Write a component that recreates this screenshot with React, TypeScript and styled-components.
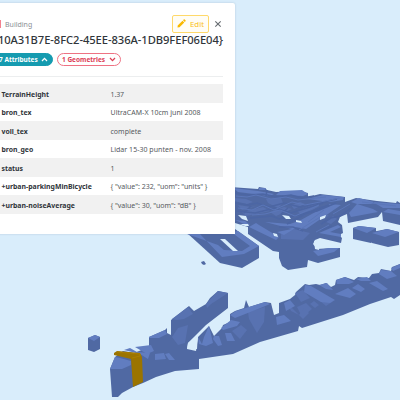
import React from 'react';
import styled, { createGlobalStyle } from 'styled-components';

const GlobalStyle = createGlobalStyle`
  body { margin: 0; overflow: hidden; background: #d9edfb; }
  * { box-sizing: border-box; }
`;

const Viewer = styled.main`
  position: relative;
  width: 400px;
  height: 400px;
  overflow: hidden;
  background: #d9edfb;
  font-family: "Noto Sans", "Open Sans", sans-serif;
  color: #30353a;
`;

const Scene = styled.svg`
  display: block;
  width: 400px;
  height: 400px;
`;

const Panel = styled.section`
  position: absolute;
  top: 3px;
  left: -10px;
  width: 245px;
  height: 231px;
  padding: 11px 12px 0 0;
  background: #fff;
  border-radius: 0 2px 0 0;
  box-shadow: 0 0 2px rgba(70, 100, 130, 0.3);
`;

const Header = styled.header`
  display: flex;
  align-items: center;
  height: 19px;
  padding-left: 8px;
`;

const Tag = styled.span`
  width: 3px;
  height: 8px;
  margin-top: 1px;
  background: #f3818f;
`;

const Kind = styled.span`
  flex: 1;
  margin: 2px 0 0 4px;
  font-size: 7px;
  line-height: 10px;
  color: #8a8f94;
`;

const EditButton = styled.button`
  display: flex;
  align-items: center;
  justify-content: center;
  gap: 4px;
  width: 37px;
  height: 18px;
  padding: 0;
  border: 1px solid #ffd96a;
  border-radius: 2px;
  background: #fffdf5;
  color: #f9bf20;
  font: 7.8px "Noto Sans", sans-serif;
`;

const CloseButton = styled.button`
  display: flex;
  margin: 0 1px 0 5px;
  padding: 0;
  border: 0;
  background: none;
`;

const Title = styled.h1`
  display: flex;
  justify-content: flex-end;
  margin: 0;
  height: 14px;
  font-size: 11.2px;
  font-weight: 500;
  line-height: 14px;
  letter-spacing: -0.06px;
  white-space: nowrap;
`;

const Pills = styled.div`
  display: flex;
  gap: 4px;
  height: 30px;
  padding-top: 6px;
  border-bottom: 1px solid #eceeef;
`;

const Pill = styled.button<{ $filled?: boolean }>`
  display: flex;
  align-items: center;
  justify-content: space-between;
  width: 64px;
  height: 13px;
  padding: 0 4px;
  border: 1px solid ${p => (p.$filled ? '#159bb0' : '#ee7283')};
  border-radius: 7px;
  background: ${p => (p.$filled ? '#159bb0' : '#fff')};
  color: ${p => (p.$filled ? '#fff' : '#dc4056')};
  font: 700 6.5px "Noto Sans", sans-serif;
  white-space: nowrap;
  &:first-child { width: 63px; padding-left: 8px; }
`;

const Attributes = styled.dl`
  display: grid;
  grid-auto-rows: 18.5px;
  margin: 7.4px 0 0;
`;

const Row = styled.div`
  display: grid;
  grid-template-columns: 109px 1fr;
  align-items: center;
  padding: 1px 0 0 11.5px;
  font-size: 7px;
  line-height: 9px;
  white-space: pre;
  &:nth-child(odd) { background: #f1f1f1; }
`;

const Name = styled.dt`
  font-size: 6.9px;
  font-weight: 700;
`;

const Value = styled.dd<{ $spacing: number }>`
  margin: 0;
  color: #55595d;
  letter-spacing: ${p => p.$spacing}px;
`;

const attributes: [string, string, number][] = [
  ['TerrainHeight', '1.37', -0.1],
  ['bron_tex', 'UltraCAM-X 10cm juni 2008', 0.03],
  ['voll_tex', 'complete', 0],
  ['bron_geo', 'Lidar 15-30 punten - nov. 2008', 0.03],
  ['status', '1', 0],
  ['+urban-parkingMinBicycle', '{ "value": 232, "uom": "units" }', -0.02],
  ['+urban-noiseAverage', '{ "value": 30, "uom": "dB" }', -0.02],
];

const wall = '#5069a3';
const roof = '#617dc0';
const mid = '#5872b1';
const ground = '#d9edfb';

const walls = [
  // City blocks on the far side of the water
  '230,187 258,189 259,187 265,188 267,190 276,192 300,191 308,193 308,197 320,194 345,197 345,202 356,198 377,201 396,203 397,201 400,203 400,225 383,221 382,212 378,217 348,223 347,214 340,217 338,222 342,225 343,233 339,235 342,238 341,243 320,238 315,240 313,244 317,249 332,248 340,248 340,257 318,263 308,260 307,267 288,270 282,266 279,258 279,252 273,251 248,234 248,227 235,223 230,220',
  // Courtyard block
  '187,233 235,229 259,246 259,258 242,268 220,263',
  // Freestanding blocks
  '353,228 359,226 376,228 376,240 371,243 353,239',
  '372,232 387,229 399,232 399,245 388,247 372,243',
  '201,262 204,261 206,264 204,265 202,264',
  '88,338 95,335 100,337 100,349 94,352 88,350',
  // Long waterfront row
  '196,351 198,337 209,326 214,336 222,328 223,325 230,322 230,314 235,311 244,308 246,300 249,307 265,302 271,303 274,315 279,313 279,303 290,299 295,295 296,292 305,284 309,285 316,284 320,285 326,283 331,287 335,285 336,280 345,277 354,280 358,277 369,278 372,274 379,273 381,269 391,271 392,267 400,264 400,295 394,299 391,297 370,304 343,315 302,328 299,326 298,331 260,342 233,354 199,359 199,369 175,371 156,377 143,383 133,387 122,393 118,397 112,397 110,369 115,357 123,351 134,353 149,347 149,337 165,330 167,328 167,333 171,335 171,320 189,306 194,311 206,304 210,298 218,291 228,293 228,308 206,325 188,343 187,349',
];

const roofs = [
  '187,234 199,233 222,257 244,254 259,246 238,231 231,232 250,246 242,251 224,250 218,245',
  '353,228 359,226 376,228 367,233', '372,233 387,229 399,232 385,237',
  '88,338 95,335 100,337 94,341',
  '110,369 115,357 120,358 131,361 131,365 122,369',
  '124,350 130,348 137,352 150,353 148,359 140,354',
  '135,347 151,345 154,351 147,354', '149,337 165,330 167,334 159,338 149,338',
  '155,354 164,353 166,359 155,360', '165,354 169,353 175,360 169,360',
  '198,337 202,344 204,337 209,326 213,343 206,346 199,344',
  '214,336 219,336 222,345 218,346 213,339', '225,333 231,333 235,341 227,341',
  '221,328 231,320 240,322 237,326 223,330', '230,315 236,311 265,302 270,304 263,307 235,318',
  '276,317 284,315 291,321 277,325', '284,303 290,300 295,306 286,311',
  '305,285 311,286 335,300 330,303 321,302 304,292',
  '319,285 327,283 333,290 326,289', '336,280 345,277 354,282 349,284 337,284',
  '335,294 348,288 356,294 350,298', '356,279 367,277 371,281 361,281',
  '352,288 358,284 365,289 361,292', '369,283 377,281 388,289 383,291',
  '381,270 391,271 397,276 387,279 379,274', '391,268 400,264 400,268 393,271',
  '233,188 258,191 274,194 270,196 238,192', '259,188 266,188 265,190 259,190',
  '280,191 302,190 308,194 303,196 276,195', '307,199 323,195 344,197 343,200 330,202',
  '349,213 357,204 373,209 378,212 351,217', '383,212 388,209 400,211 400,215',
  '351,202 359,198 374,202 371,204 357,204', '373,202 400,204 400,208 383,208',
  '235,220 245,221 250,225 244,224',
  '249,227 256,223 259,225 279,237 276,240',
  '265,222 290,224 299,221 302,224 284,235 277,232 292,229',
  '290,226 330,204 341,205 306,229',
  '319,233 338,225 341,227 330,232 341,234 341,237', '313,251 329,248 339,248 334,252 318,256',
];

const accents = [
  '172,319 188,307 193,314 184,319 177,320', '206,304 218,291 228,293 211,304 207,308',
  '295,293 303,290 310,298 301,302', '297,307 306,303 312,309 302,317',
  '310,304 314,301 319,305 315,308', '281,234 294,229 310,233 303,240 281,239',
  '235,198 246,199 253,202 247,204 234,201', '266,199 281,198 283,203 278,208 268,203',
  '242,212 263,207 270,211 246,216', '270,212 284,207 292,209 276,216',
  '291,205 300,202 305,204 294,209', '297,211 315,204 319,206 303,216',
  '238,205 251,207 257,206 242,210', '302,220 323,212 329,216 316,220',
  '326,222 333,216 337,219 331,224', '248,312 265,307 264,322 257,333 249,319',
  '287,303 291,311 299,315 304,308 309,313 303,319', '232,331 241,325 247,330 240,339',
  '324,297 332,302 326,306 320,301', '178,328 188,325 185,343 178,345 172,337',
];

const gaps = [
  '220,239 225,239 238,251 233,251', '238,215 246,216 248,221 242,219',
  '240,224 248,224 249,226 245,226', '273,233 277,234 278,237 274,236',
  '296,220 301,221 302,223 296,222',
  '282,215 289,216 291,219 286,219', '314,241 317,240 320,242 319,250 315,249',
  '320,217 326,215 325,218 320,220',
];

const seams = [
  'M235 193L248 195L263 194L277 197L291 195L302 198L314 196',
  'M235 203L248 205L257 203L269 207L284 203L300 207L337 199',
  'M237 211L255 213L275 208L291 213L323 203',
  'M250 218L272 216L279 219L303 214L329 205',
  'M287 224L307 213L317 211L336 203M279 227L293 227L303 231',
  'M321 224L331 218L340 216L351 208M321 230L332 226',
  'M267 190L266 196M251 206L244 213M288 208L281 214',
];

const fine = [
  'M236 196L247 197L256 195L271 199L286 197L298 200L326 197',
  'M238 208L252 210L263 205L274 210L292 202L305 205L340 198',
  'M252 215L265 214L280 210L295 216L319 205M308 222L324 210',
  'M299 230L322 216M316 232L329 225M333 214L350 204M362 202L396 206',
];

const Shapes = ({ items, fill }: { items: string[]; fill: string }) => (
  <g fill={fill}>{items.map(points => <polygon key={points} points={points} />)}</g>
);

const City = () => (
  <Scene viewBox="0 0 400 400" aria-label="3D city model">
    <Shapes items={walls} fill={wall} />
    <Shapes items={accents} fill={mid} />
    <Shapes items={roofs} fill={roof} />
    <g fill="none" strokeWidth="1.5">
      {seams.map(d => <path key={d} d={d} stroke="#4c66a4" />)}
      {fine.map(d => <path key={d} d={d} stroke="#5b77b9" strokeWidth="1" />)}
    </g>
    <Shapes items={gaps} fill={ground} />
    <polygon points="187,349 188,343 198,334 197,349" fill={ground} />
    <polygon points="114,353 117,351 140,353 142,357 143,382 133,387 131,359 114,355" fill="#9b7400" />
    <path d="M117 352L140 354L140 356L132 358" fill="none" stroke="#aa7e00" strokeWidth="1" />
  </Scene>
);

const Chevron = ({ up }: { up?: boolean }) => (
  <svg width="7" height="5" viewBox="0 0 7 5" fill="none" stroke="currentColor" strokeWidth="1.3">
    <path d={up ? 'M1 4L3.5 1.4L6 4' : 'M1 1L3.5 3.6L6 1'} />
  </svg>
);

export default function App() {
  return (
    <Viewer>
      <GlobalStyle />
      <City />
      <Panel>
        <Header>
          <Tag />
          <Kind>Building</Kind>
          <EditButton>
            <svg width="9" height="9" viewBox="0 0 9 9" fill="#f9b900">
              <path d="M.7 6.5L5.5 1.7L7.3 3.5L2.5 8.3L.5 8.5zM6 1.2L6.7.5Q7.2.1 7.7.5L8.5 1.3Q8.9 1.8 8.5 2.3L7.8 3z" />
            </svg>
            Edit
          </EditButton>
          <CloseButton aria-label="Close">
            <svg width="8" height="8" viewBox="0 0 8 8" stroke="#666b70" strokeWidth="1.1">
              <path d="M1.3 1.3L6.7 6.7M6.7 1.3L1.3 6.7" />
            </svg>
          </CloseButton>
        </Header>
        <Title>{'10A31B7E-8FC2-45EE-836A-1DB9FEF06E04}'}</Title>
        <Pills>
          <Pill $filled>7 Attributes <Chevron up /></Pill>
          <Pill>1 Geometries <Chevron /></Pill>
        </Pills>
        <Attributes>
          {attributes.map(([name, value, spacing]) => (
            <Row key={name}>
              <Name>{name}</Name>
              <Value $spacing={spacing}>{value}</Value>
            </Row>
          ))}
        </Attributes>
      </Panel>
    </Viewer>
  );
}
